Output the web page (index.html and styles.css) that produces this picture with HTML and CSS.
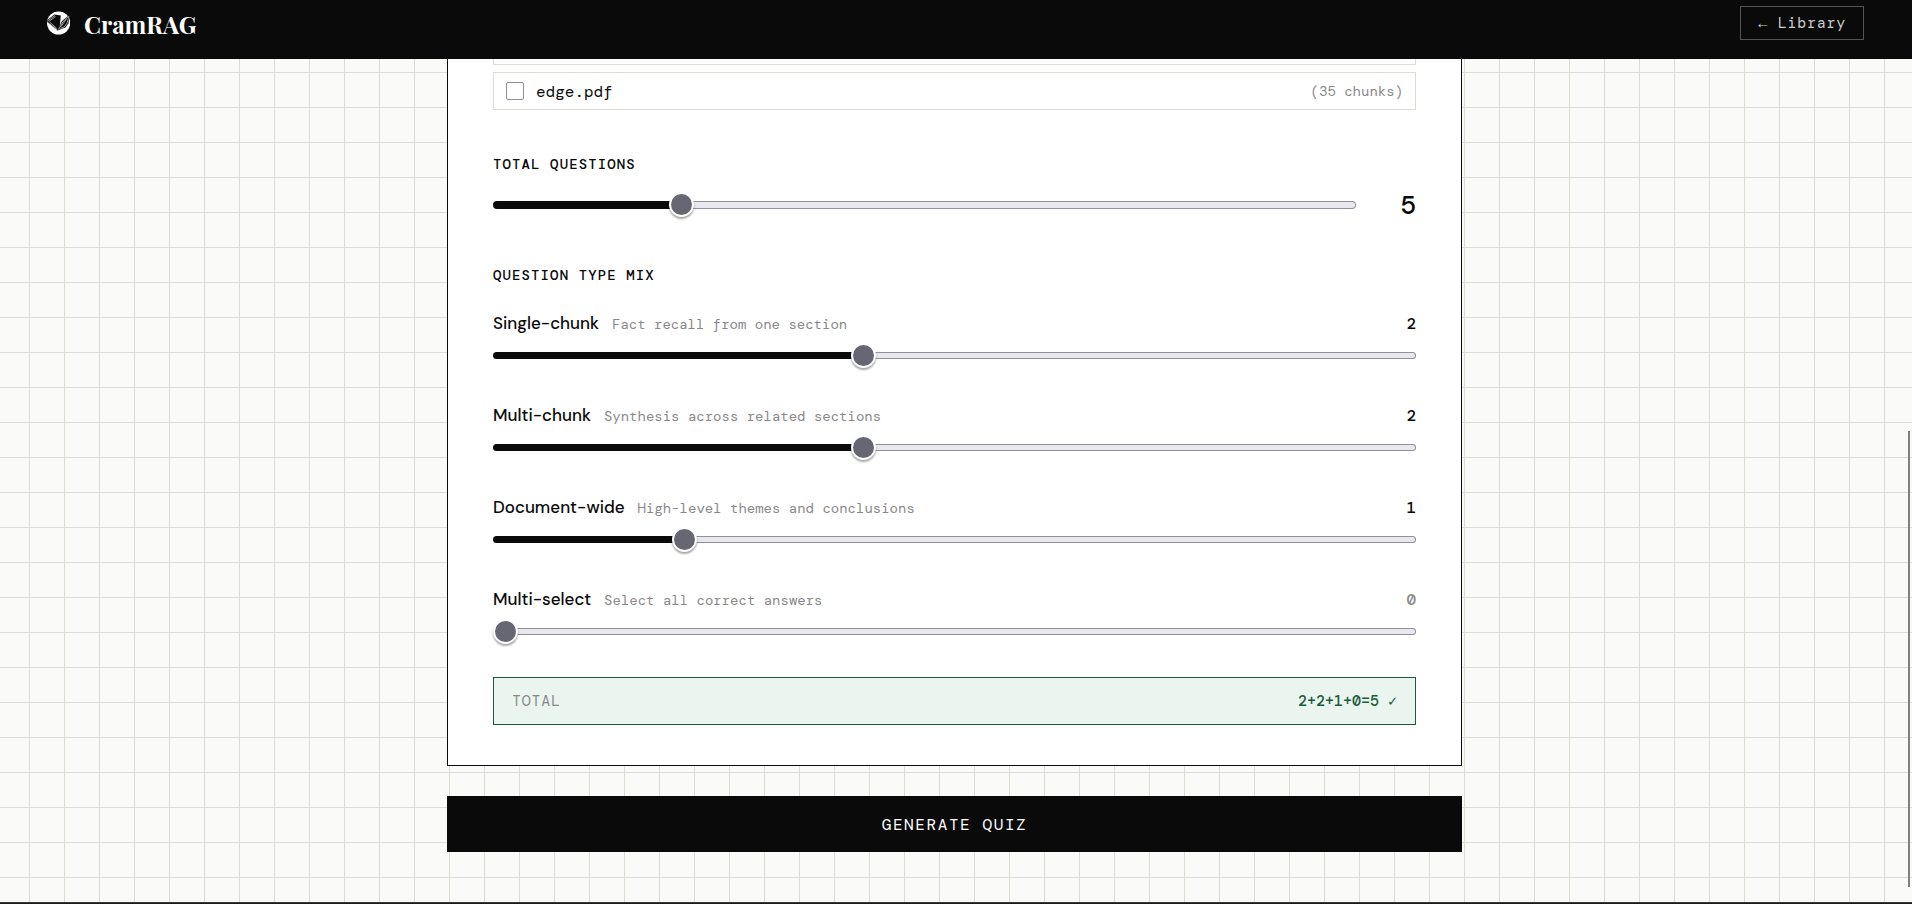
FILE: index.html
```html
<!DOCTYPE html>
<html lang="en">
<head>
    <meta charset="UTF-8">
    <meta name="viewport" content="width=device-width, initial-scale=1.0">
    <title>Generate Quiz - CramRAG</title>
    <link rel="stylesheet" href="styles.css">
</head>
<body>
    <header class="site-header">
        <div class="brand">
            <svg class="brand-logo" viewBox="0 0 24 24" aria-hidden="true">
                <circle cx="12.6" cy="12" r="11.6" fill="#fff"/>
                <path d="M0 10L8.4 3.6l6.4.8-1 10.6-2.4 4.4z" fill="#0a0a0a"/>
                <path d="M11.4 19.4l4.6-9.4 7.8-6.4-1.4 8.8-3 4.2z" fill="#0a0a0a"/>
                <path d="M1 10.4l7.6-5.8M2.8 10.6l6.8-5.2M1.4 11.2l9.6 7.4M3.6 11l7.2 6.4" stroke="#ddd" stroke-width=".7" fill="none"/>
                <path d="M12.6 18.6l4.4-8 5.6-5.2M14.4 17.4l4-1.6 3-4.2 1.4-6.4M15.2 15.4l5-7" stroke="#ddd" stroke-width=".7" fill="none"/>
            </svg>
            <span class="brand-name">CramRAG</span>
        </div>
        <a href="#" class="nav-btn">← Library</a>
    </header>

    <main class="quiz-page">
        <form class="quiz-form">
            <div class="card">
                <div class="file-item file-item-cut"></div>
                <label class="file-item">
                    <input type="checkbox" class="file-check" name="document">
                    <span class="file-name">edge.pdf</span>
                    <span class="file-chunks">(35 chunks)</span>
                </label>

                <section class="form-section">
                    <label class="section-label" for="total">Total Questions</label>
                    <div class="total-slider">
                        <input type="range" id="total" class="slider slider-lg" min="1" max="20" value="5" style="--pos: 0.2105">
                        <output class="total-value" for="total">5</output>
                    </div>
                </section>

                <section class="form-section">
                    <h2 class="section-label">Question Type Mix</h2>
                    <div class="mix-list">
                        <div class="mix-item">
                            <div class="mix-header">
                                <label class="mix-name" for="single">Single-chunk</label>
                                <span class="mix-desc">Fact recall from one section</span>
                                <output class="mix-value" for="single">2</output>
                            </div>
                            <input type="range" id="single" class="slider" min="0" max="5" value="2" style="--pos: 0.4">
                        </div>
                        <div class="mix-item">
                            <div class="mix-header">
                                <label class="mix-name" for="multi">Multi-chunk</label>
                                <span class="mix-desc">Synthesis across related sections</span>
                                <output class="mix-value" for="multi">2</output>
                            </div>
                            <input type="range" id="multi" class="slider" min="0" max="5" value="2" style="--pos: 0.4">
                        </div>
                        <div class="mix-item">
                            <div class="mix-header">
                                <label class="mix-name" for="wide">Document-wide</label>
                                <span class="mix-desc">High-level themes and conclusions</span>
                                <output class="mix-value" for="wide">1</output>
                            </div>
                            <input type="range" id="wide" class="slider" min="0" max="5" value="1" style="--pos: 0.2">
                        </div>
                        <div class="mix-item">
                            <div class="mix-header">
                                <label class="mix-name" for="select">Multi-select</label>
                                <span class="mix-desc">Select all correct answers</span>
                                <output class="mix-value zero" for="select">0</output>
                            </div>
                            <input type="range" id="select" class="slider" min="0" max="5" value="0" style="--pos: 0">
                        </div>
                    </div>
                    <div class="mix-total">
                        <span class="mix-total-label">TOTAL</span>
                        <span class="mix-total-sum">2+2+1+0=5 ✓</span>
                    </div>
                </section>
            </div>

            <button type="button" class="generate-btn">Generate Quiz</button>
        </form>
    </main>

    <footer class="site-footer"></footer>
    <div class="scroll-thumb"></div>
</body>
</html>
```
FILE: styles.css
```css
* {
    margin: 0;
    padding: 0;
    box-sizing: border-box;
}

:root {
    --ink: #0a0a0a;
    --paper: #fafaf8;
    --line: #dcdcd5;
    --muted: #888888;
    --green: #1a5c3a;
    --green-bg: #ebf5f0;
    --mono: "DM Mono", "Liberation Mono", monospace;
    --sans: "DM Sans", Inter, sans-serif;
    --serif: "Playfair Display", "Liberation Serif", serif;
}

body {
    min-height: 100vh;
    display: flex;
    flex-direction: column;
    background: var(--paper);
    color: var(--ink);
    font-family: var(--sans);
    overflow: hidden;
}

/* Header */
.site-header {
    display: flex;
    justify-content: space-between;
    align-items: flex-start;
    padding: 6px 48px 19px 46px;
    background: var(--ink);
}

.brand {
    display: flex;
    align-items: center;
    gap: 14px;
    height: 34px;
    color: #ffffff;
}

.brand-logo {
    width: 24px;
    height: 24px;
}

.brand-name {
    padding-top: 2px;
    font-family: var(--serif);
    font-size: 24px;
    font-weight: 700;
    line-height: 34px;
}

.nav-btn {
    padding: 6px 17px;
    border: 1px solid #555555;
    color: #cccccc;
    font-family: var(--mono);
    font-size: 15px;
    line-height: 20px;
    letter-spacing: 0.05em;
    text-decoration: none;
}

/* Page with the graph paper grid */
.quiz-page {
    flex: 1;
    padding: 0 3px 50px 0;
    background-image:
        linear-gradient(var(--line) 1px, transparent 1px),
        linear-gradient(90deg, var(--line) 1px, transparent 1px);
    background-size: 35px 35px;
    background-position: 29px 13px;
}

.quiz-form {
    max-width: 1015px;
    margin: 0 auto;
}

.card {
    padding: 0 45px 40px;
    background: #ffffff;
    border: 1px solid var(--ink);
    border-top: none;
}

.file-item {
    display: flex;
    align-items: center;
    gap: 12px;
    height: 38px;
    padding: 0 12px;
    border: 1px solid var(--line);
    font-family: var(--mono);
}

.file-item-cut {
    height: 6px;
    margin-bottom: 7px;
    border-top: none;
}

.file-check {
    appearance: none;
    width: 18px;
    height: 18px;
    border: 1px solid #8f8f9d;
    border-radius: 2px;
    background: #ffffff;
}

.file-name {
    flex: 1;
    font-size: 16px;
}

.file-chunks {
    color: var(--muted);
    font-size: 14px;
}

.form-section {
    margin-top: 44px;
}

.section-label {
    display: block;
    font-family: var(--mono);
    font-size: 14px;
    font-weight: 500;
    line-height: 20px;
    letter-spacing: 0.08em;
    text-transform: uppercase;
}

/* Sliders */
.total-slider {
    display: flex;
    align-items: center;
    gap: 15px;
    height: 32px;
    margin-top: 15px;
}

.total-value {
    width: 45px;
    font-family: var(--mono);
    font-size: 26px;
    font-weight: 500;
    text-align: right;
}

.slider {
    --track: 7px;
    appearance: none;
    display: block;
    width: 100%;
    height: 25px;
    background: none;
}

.slider-lg {
    --track: 8px;
    flex: 1;
}

.slider::-webkit-slider-runnable-track {
    height: var(--track);
    border: 1px solid transparent;
    border-radius: 4px;
    background:
        linear-gradient(var(--ink), var(--ink)) 0 0 / calc(var(--pos) * 100%) 100% no-repeat border-box,
        linear-gradient(#e9e9ed, #e9e9ed) padding-box,
        linear-gradient(#8f8f9d, #8f8f9d) border-box;
}

.slider::-webkit-slider-thumb {
    appearance: none;
    width: 25px;
    height: 25px;
    margin: -10px 0 0 -1px;
    border: 2px solid #ffffff;
    border-radius: 50%;
    background: #676774;
    box-shadow: 0 2px 2px rgba(0, 0, 0, 0.35);
}

.mix-list {
    display: flex;
    flex-direction: column;
    gap: 35px;
    margin-top: 26px;
}

.mix-header {
    display: flex;
    align-items: baseline;
    gap: 13px;
    height: 24px;
    margin-bottom: 8px;
    line-height: 24px;
}

.mix-name {
    font-size: 17px;
    font-weight: 500;
}

.mix-desc {
    flex: 1;
    color: var(--muted);
    font-family: var(--mono);
    font-size: 14px;
}

.mix-value {
    font-family: var(--mono);
    font-size: 16px;
    font-weight: 500;
}

.mix-value.zero {
    color: var(--muted);
}

.mix-total {
    display: flex;
    justify-content: space-between;
    align-items: center;
    height: 48px;
    margin-top: 33px;
    padding: 0 18px;
    border: 1px solid var(--green);
    background: var(--green-bg);
    font-family: var(--mono);
}

.mix-total-label {
    color: var(--muted);
    font-size: 15px;
    letter-spacing: 0.05em;
}

.mix-total-sum {
    color: var(--green);
    font-size: 15px;
    font-weight: 500;
}

.generate-btn {
    display: block;
    width: 100%;
    height: 56px;
    margin-top: 30px;
    border: none;
    background: var(--ink);
    color: #ffffff;
    font-family: var(--mono);
    font-size: 16px;
    letter-spacing: 0.1em;
    text-transform: uppercase;
    cursor: pointer;
}

.site-footer {
    height: 2px;
    border-top: 1px solid #3a3a3a;
    background: #1a1a1a;
}

/* Overlay scrollbar, floats over the page edge */
.scroll-thumb {
    position: fixed;
    right: 2px;
    bottom: 17px;
    width: 2px;
    height: 456px;
    background: #808080;
}
```
